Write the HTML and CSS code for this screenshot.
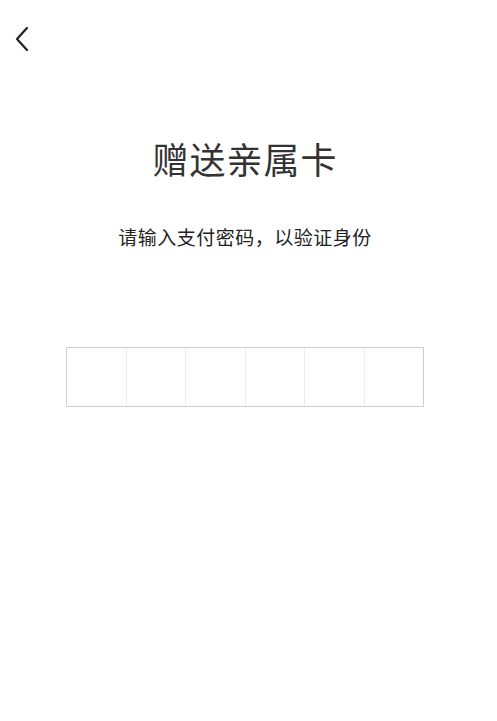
FILE: index.html
```html
<!DOCTYPE html>
<html lang="zh">
<head>
<meta charset="utf-8">
<link rel="stylesheet" href="styles.css">
</head>
<body>
<div class="page">
  <div class="nav">
    <svg class="back" width="16" height="26" viewBox="0 0 16 26"><path d="M13 2 L3 13 L13 24" fill="none" stroke="#222" stroke-width="2.2" stroke-linecap="round" stroke-linejoin="round"/></svg>
  </div>
  <h1 class="title">赠送亲属卡</h1>
  <p class="sub">请输入支付密码，以验证身份</p>
  <div class="pwd">
    <div class="cell"></div><div class="cell"></div><div class="cell"></div><div class="cell"></div><div class="cell"></div><div class="cell"></div>
  </div>
</div>
</body>
</html>
```
FILE: styles.css
```css
html, body { margin: 0; padding: 0; background: #fff; }
body { font-family: "Noto Sans CJK SC", "Noto Sans", sans-serif; color: #333; }
.page { width: 490px; height: 721px; display: flex; flex-direction: column; align-items: center; }
.nav { align-self: stretch; height: 76px; padding: 26px 0 0 14px; box-sizing: border-box; }
.back { display: block; }
.title { margin: 60px 0 0; font-size: 36px; font-weight: 400; line-height: 44px; color: #333; letter-spacing: 1px; }
.sub { margin: 44px 0 0; font-size: 19px; line-height: 26px; color: #222; letter-spacing: 0.5px; }
.pwd { margin-top: 97px; width: 358px; height: 60px; border: 1px solid #cfcfcf; box-sizing: border-box; display: flex; }
.cell { flex: 1; border-left: 1px solid #ececec; }
.cell:first-child { border-left: none; }
```
